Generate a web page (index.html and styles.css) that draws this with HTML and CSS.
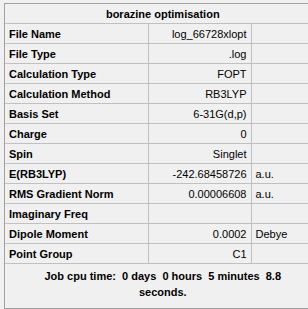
FILE: index.html
```html
<!DOCTYPE html>
<html>
<head>
<meta charset="utf-8">
<link rel="stylesheet" href="styles.css">
</head>
<body>
<div class="panel">
  <table class="grid">
    <colgroup><col class="c-label"><col class="c-value"><col class="c-unit"></colgroup>
    <tr><th class="title" colspan="3">borazine optimisation</th></tr>
    <tr><td class="label">File Name</td><td class="value">log_66728xlopt</td><td class="unit"></td></tr>
    <tr><td class="label">File Type</td><td class="value">.log</td><td class="unit"></td></tr>
    <tr><td class="label">Calculation Type</td><td class="value">FOPT</td><td class="unit"></td></tr>
    <tr><td class="label">Calculation Method</td><td class="value">RB3LYP</td><td class="unit"></td></tr>
    <tr><td class="label">Basis Set</td><td class="value">6-31G(d,p)</td><td class="unit"></td></tr>
    <tr><td class="label">Charge</td><td class="value">0</td><td class="unit"></td></tr>
    <tr><td class="label">Spin</td><td class="value">Singlet</td><td class="unit"></td></tr>
    <tr><td class="label">E(RB3LYP)</td><td class="value">-242.68458726</td><td class="unit">a.u.</td></tr>
    <tr><td class="label">RMS Gradient Norm</td><td class="value">0.00006608</td><td class="unit">a.u.</td></tr>
    <tr><td class="label">Imaginary Freq</td><td class="value"></td><td class="unit"></td></tr>
    <tr><td class="label">Dipole Moment</td><td class="value">0.0002</td><td class="unit">Debye</td></tr>
    <tr><td class="label">Point Group</td><td class="value">C1</td><td class="unit"></td></tr>
    <tr><td class="footer" colspan="3">Job cpu time:&nbsp; 0 days&nbsp; 0 hours&nbsp; 5 minutes&nbsp; 8.8<br>seconds.</td></tr>
  </table>
</div>
</body>
</html>
```
FILE: styles.css
```css
html, body {
  margin: 0;
  padding: 0;
  background: #f0f0f0;
  overflow: hidden;
}
body {
  font-family: "Liberation Sans", Arial, sans-serif;
  font-size: 11px;
  color: #000;
}
.panel {
  margin: 3px 0 0 4px;
  width: 316px;
  border-left: 1px solid #a0a0a0;
  border-top: 1px solid #a0a0a0;
  border-bottom: 2px solid #a0a0a0;
}
.grid {
  border-collapse: collapse;
  width: 316px;
  table-layout: fixed;
}
.c-label { width: 143px; }
.c-value { width: 103px; }
.c-unit { width: 70px; }
.grid td, .grid th {
  height: 19px;
  padding: 0 4px;
  border-top: 1px solid #c0c0c0;
  border-right: 1px solid #c0c0c0;
  white-space: nowrap;
  overflow: hidden;
}
.grid tr:first-child th { border-top: none; }
.title {
  font-weight: bold;
  text-align: center;
  height: 18px;
}
.label {
  font-weight: bold;
  text-align: left;
  padding-left: 3px;
}
.value {
  text-align: right;
  padding-right: 4px;
}
.unit {
  text-align: left;
  padding-left: 5px;
}
.grid td.footer {
  font-weight: bold;
  text-align: center;
  height: 40px;
  line-height: 16px;
  padding-bottom: 4px;
}
```
